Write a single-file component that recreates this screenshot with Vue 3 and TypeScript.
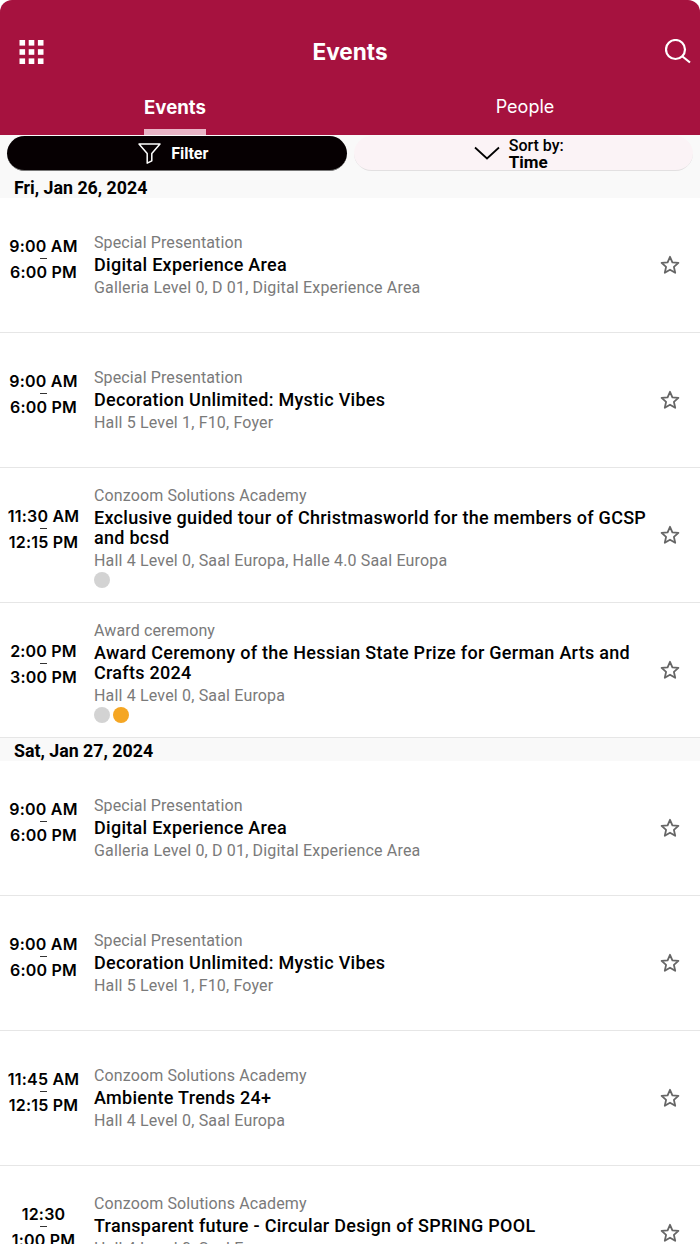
<template>
  <div class="app">
    <header class="top">
      <div class="bar">
        <button class="icon-btn" aria-label="Menu">
          <svg class="grid" width="26" height="26" viewBox="0 0 26 26" fill="#fff">
            <template v-for="y in [1, 10.2, 19.4]" :key="y">
              <rect v-for="x in [0.5, 9.7, 18.9]" :key="x" :x="x" :y="y" width="5.6" height="5.6" />
            </template>
          </svg>
        </button>
        <h1 class="title">Events</h1>
        <button class="icon-btn end" aria-label="Search">
          <svg width="26" height="26" viewBox="0 0 26 26" fill="none" stroke="#fff" stroke-width="2.2">
            <circle cx="10.5" cy="10.5" r="9.5" />
            <path d="M17.5 17.5l7.5 6" />
          </svg>
        </button>
      </div>
      <nav class="tabs">
        <div class="tab active"><span>Events</span><i class="marker"></i></div>
        <div class="tab">People</div>
      </nav>
    </header>

    <div class="actions">
      <button class="pill dark">
        <svg width="24" height="24" viewBox="0 0 24 24" fill="none" stroke="#fff" stroke-width="1.5" stroke-linejoin="round">
          <path d="M2 3h21l-8.2 9.6v7.2l-4.6 2.4v-9.6z" />
        </svg>
        <span>Filter</span>
      </button>
      <button class="pill light">
        <svg width="26" height="14" viewBox="0 0 26 14" fill="none" stroke="#000" stroke-width="1.7">
          <path d="M1 1.5l12 11 12-11" />
        </svg>
        <span class="sort"><span>Sort by:</span><b>Time</b></span>
      </button>
    </div>

    <section v-for="day in days" :key="day.date">
      <div class="day">{{ day.date }}</div>
      <div v-for="ev in day.events" :key="ev.title + ev.start" class="row">
        <div class="time">
          <span>{{ ev.start }}</span>
          <i class="dash"></i>
          <span>{{ ev.end }}</span>
        </div>
        <div class="info">
          <div class="cat">{{ ev.cat }}</div>
          <div class="name">{{ ev.title }}</div>
          <div class="loc">{{ ev.loc }}</div>
          <div v-if="ev.dots" class="dots">
            <i v-for="d in ev.dots" :key="d" class="dot" :style="{ background: d }"></i>
          </div>
        </div>
        <svg class="star" width="20" height="20" viewBox="0 0 20 20" fill="none" stroke="#666" stroke-width="1.8" stroke-linejoin="round">
          <path d="M10 1.8l2.4 5.5 6 .6-4.5 4 1.3 5.9L10 14.7l-5.2 3.1 1.3-5.9-4.5-4 6-.6z" />
        </svg>
      </div>
    </section>
  </div>
</template>

<script setup lang="ts">
type EventItem = {
  start: string
  end: string
  cat: string
  title: string
  loc: string
  dots?: string[]
}

const grey = '#d3d3d3'
const orange = '#f5a623'

const days: { date: string; events: EventItem[] }[] = [
  {
    date: 'Fri, Jan 26, 2024',
    events: [
      { start: '9:00 AM', end: '6:00 PM', cat: 'Special Presentation', title: 'Digital Experience Area', loc: 'Galleria Level 0, D 01, Digital Experience Area' },
      { start: '9:00 AM', end: '6:00 PM', cat: 'Special Presentation', title: 'Decoration Unlimited: Mystic Vibes', loc: 'Hall 5 Level 1, F10, Foyer' },
      { start: '11:30 AM', end: '12:15 PM', cat: 'Conzoom Solutions Academy', title: 'Exclusive guided tour of Christmasworld for the members of GCSP and bcsd', loc: 'Hall 4 Level 0, Saal Europa, Halle 4.0 Saal Europa', dots: [grey] },
      { start: '2:00 PM', end: '3:00 PM', cat: 'Award ceremony', title: 'Award Ceremony of the Hessian State Prize for German Arts and Crafts 2024', loc: 'Hall 4 Level 0, Saal Europa', dots: [grey, orange] },
    ],
  },
  {
    date: 'Sat, Jan 27, 2024',
    events: [
      { start: '9:00 AM', end: '6:00 PM', cat: 'Special Presentation', title: 'Digital Experience Area', loc: 'Galleria Level 0, D 01, Digital Experience Area' },
      { start: '9:00 AM', end: '6:00 PM', cat: 'Special Presentation', title: 'Decoration Unlimited: Mystic Vibes', loc: 'Hall 5 Level 1, F10, Foyer' },
      { start: '11:45 AM', end: '12:15 PM', cat: 'Conzoom Solutions Academy', title: 'Ambiente Trends 24+', loc: 'Hall 4 Level 0, Saal Europa' },
      { start: '12:30', end: '1:00 PM', cat: 'Conzoom Solutions Academy', title: 'Transparent future - Circular Design of SPRING POOL', loc: 'Hall 4 Level 0, Saal Europa', dots: [grey] },
    ],
  },
]
</script>

<style>
html, body {
  margin: 0;
  background: #fff;
}
</style>

<style scoped>
.app {
  width: 700px;
  height: 1244px;
  overflow: hidden;
  font-family: Roboto, "Liberation Sans", sans-serif;
  color: #000;
  background: #fff;
}
.top {
  height: 135px;
  background: #a6123f;
  border-radius: 12px 12px 0 0;
  color: #fff;
  display: flex;
  flex-direction: column;
}
.bar {
  height: 89px;
  padding: 15px 9px 0;
  box-sizing: border-box;
  display: flex;
  align-items: center;
  justify-content: space-between;
}
.icon-btn {
  width: 37px;
  border: 0;
  padding: 0;
  background: none;
  display: flex;
  justify-content: flex-start;
}
.icon-btn.end {
  justify-content: flex-end;
}
.grid {
  margin-left: 10px;
}
.title {
  margin: 0 0 2px;
  font-family: Inter, sans-serif;
  font-size: 22.6px;
  font-weight: 700;
}
.tabs {
  flex: 1;
  display: grid;
  grid-template-columns: 1fr 1fr;
  font-family: Inter, sans-serif;
  font-size: 18px;
}
.tab {
  position: relative;
  text-align: center;
  line-height: 36px;
}
.tab.active {
  font-size: 18.6px;
  font-weight: 700;
}
.marker {
  position: absolute;
  left: 144px;
  bottom: 0;
  width: 62px;
  height: 6px;
  background: #e9b4c6;
}
.actions {
  height: 36px;
  padding: 1px 7px 0;
  box-sizing: border-box;
  display: grid;
  grid-template-columns: 1fr 1fr;
  gap: 7px;
  background: #f9f9f9;
}
.pill {
  min-width: 0;
  border: 0;
  padding: 0;
  border-radius: 18px;
  display: flex;
  align-items: center;
  justify-content: center;
  font-family: inherit;
  font-size: 16px;
}
.dark {
  background: #060002;
  color: #fff;
  font-weight: 700;
  gap: 10px;
  padding-right: 8px;
  border-bottom: 1px solid #777;
}
.light {
  background: #fbf3f6;
  color: #000;
  gap: 9px;
  border-bottom: 1px solid #e2e0e1;
}
.sort {
  display: flex;
  flex-direction: column;
  text-align: left;
  line-height: 16px;
  font-weight: 500;
  width: 64px;
  padding-top: 2px;
}
.sort b {
  font-size: 17px;
  font-weight: 700;
}
.day {
  height: 27px;
  padding-left: 14px;
  background: #f9f9f9;
  font-size: 17.8px;
  font-weight: 700;
  line-height: 34px;
  overflow: hidden;
}
section + section .day {
  height: 23px;
  line-height: 26px;
}
.row {
  height: 135px;
  box-sizing: border-box;
  border-bottom: 1px solid #e6e6e6;
  display: flex;
  align-items: center;
  background: #fff;
}
.time {
  width: 87px;
  flex: none;
  padding-bottom: 12px;
  display: flex;
  flex-direction: column;
  align-items: center;
  font-family: Inter, sans-serif;
  font-size: 16px;
  font-weight: 600;
  line-height: 20px;
  letter-spacing: 0.2px;
}
.dash {
  width: 7px;
  height: 1px;
  margin: 2px 0 3px;
  background: #333;
}
.info {
  flex: 1;
  min-width: 0;
  padding-left: 7px;
}
.cat,
.loc {
  font-size: 16px;
  line-height: 22px;
  letter-spacing: 0.12px;
  color: #7a7a7a;
}
.loc {
  letter-spacing: 0.17px;
}
.name {
  font-size: 18px;
  font-weight: 500;
  line-height: 20px;
  margin: 1px 0 2px;
  letter-spacing: 0.28px;
}
.dots {
  display: flex;
  gap: 3px;
  margin: 0 0 -3px;
}
.dot {
  width: 16px;
  height: 16px;
  border-radius: 50%;
}
.star {
  flex: none;
  margin: 0 20px 0 13px;
}
</style>
